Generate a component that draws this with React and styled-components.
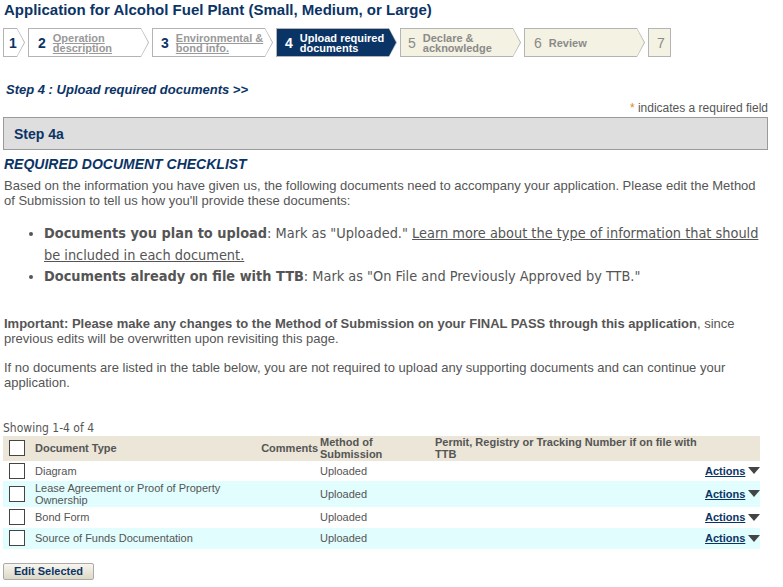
import React from 'react';
import styled, { createGlobalStyle } from 'styled-components';

const NAVY = '#0b3466';
const GREY = '#555';
const NARROW = '"Liberation Sans", Arial, sans-serif';

const GlobalStyle = createGlobalStyle`
  body {
    margin: 0;
    background: #fff;
    font-family: "Liberation Sans", Arial, sans-serif;
  }
`;

// レイアウト
const Page = styled.div`
  padding: 0 15px 0 3px;
  width: 765px;
`;
const Title = styled.h1`
  margin: 1px 0 0 1px;
  font-size: 15px;
  line-height: 18px;
  font-weight: bold;
  color: ${NAVY};
`;
const Steps = styled.div`
  display: flex;
  gap: 3px;
  margin-top: 9px;
  height: 29px;
`;
const StepOuter = styled.div`
  box-sizing: border-box;
  width: ${(p) => p.$w}px;
  padding: 1px;
  background: #b4b4b4;
  clip-path: ${(p) => (p.$tip
    ? 'polygon(0 0, calc(100% - 8px) 0, 100% 50%, calc(100% - 8px) 100%, 0 100%)'
    : 'none')};
`;
const StepInner = styled.div`
  height: 100%;
  display: flex;
  align-items: center;
  gap: 7px;
  padding-left: ${(p) => p.$pl}px;
  box-sizing: border-box;
  background: ${(p) => p.$bg};
  clip-path: ${(p) => (p.$tip
    ? 'polygon(0 0, calc(100% - 7px) 0, 100% 50%, calc(100% - 7px) 100%, 0 100%)'
    : 'none')};
`;
const StepNum = styled.span`
  font-size: 14px;
  font-weight: ${(p) => (p.$muted ? 'normal' : 'bold')};
  color: ${(p) => p.$color};
`;
const StepLabel = styled.span`
  font-size: 11px;
  line-height: 10px;
  font-weight: bold;
  color: ${(p) => p.$color};
  text-decoration: ${(p) => (p.$link ? 'underline' : 'none')};
`;
const StepHeading = styled.div`
  margin: 24px 0 0 3px;
  font-family: ${NARROW};
  font-size: 13px;
  line-height: 18px;
  font-style: italic;
  font-weight: bold;
  color: ${NAVY};
`;
const RequiredNote = styled.div`
  margin-top: 2px;
  text-align: right;
  font-family: ${NARROW};
  font-size: 12px;
  line-height: 14px;
  color: ${GREY};
  & b { color: #e0872a; font-weight: normal; }
`;
const SectionBox = styled.div`
  margin-top: 2px;
  height: 31px;
  display: flex;
  align-items: center;
  padding-left: 10px;
  background: #dedede;
  border: 1px solid #9a9a9a;
  font-family: ${NARROW};
  font-size: 14px;
  font-weight: bold;
  color: ${NAVY};
`;
const ChecklistTitle = styled.div`
  margin: 6px 0 0 1px;
  font-family: ${NARROW};
  font-size: 14px;
  line-height: 16px;
  font-style: italic;
  font-weight: bold;
  color: ${NAVY};
`;
const Para = styled.p`
  margin: ${(p) => p.$mt}px 0 0 1px;
  font-family: ${NARROW};
  font-size: 13px;
  line-height: 15px;
  color: ${GREY};
  & b { font-weight: bold; }
`;
const Bullets = styled.ul`
  margin: 15px 0 0;
  padding-left: 41px;
  font-family: "DejaVu Sans Condensed", "DejaVu Sans", sans-serif;
  font-stretch: condensed;
  font-size: 14.4px;
  line-height: 21.5px;
  color: ${GREY};
  & b { font-weight: bold; }
  & a { color: ${GREY}; text-decoration: underline; }
`;
const Showing = styled.div`
  margin: 30px 0 0;
  font-family: "DejaVu Sans Condensed", "DejaVu Sans", sans-serif;
  font-size: 12px;
  line-height: 16px;
  color: ${GREY};
`;
const Table = styled.table`
  width: 757px;
  table-layout: fixed;
  border-collapse: collapse;
  font-size: 11px;
  color: ${GREY};
  & th {
    background: #ebe6d7;
    font-weight: bold;
    text-align: left;
    vertical-align: middle;
    line-height: 12px;
    height: 25px;
    padding: 0;
  }
  & td {
    padding: 0;
    vertical-align: middle;
    line-height: 12px;
  }
`;
const Row = styled.tr`
  height: ${(p) => p.$h}px;
  background: ${(p) => (p.$alt ? '#e1fdfd' : '#fff')};
`;
const Check = styled.span`
  display: block;
  width: 14px;
  height: 14px;
  margin-left: 6px;
  border: 1px solid #444;
  background: #fff;
`;
const TypeCell = styled.td`
  padding-left: 5px !important;
`;
const HeadRight = styled.th`
  text-align: right !important;
  padding-right: 2px !important;
`;
const ActionsCell = styled.td`
  text-align: right;
  white-space: nowrap;
`;
const ActionsLink = styled.a`
  color: ${NAVY};
  font-weight: bold;
  font-size: 11px;
  text-decoration: underline;
  display: inline-flex;
  align-items: center;
  gap: 2px;
  & svg { margin-left: 1px; }
`;
const EditButton = styled.button`
  margin-top: 14px;
  width: 91px;
  height: 17px;
  padding: 0;
  border: 1px solid #aaa;
  border-radius: 2px;
  background: linear-gradient(#f8f6ee, #ddd8c6);
  font-family: "Liberation Sans", Arial, sans-serif;
  font-size: 11px;
  font-weight: bold;
  color: ${NAVY};
`;

const steps = [
  { n: '1', w: 22, tip: true, pl: 5 },
  { n: '2', label: ['Operation', 'description'], w: 121, tip: true, pl: 9, done: true },
  { n: '3', label: ['Environmental &', 'bond info.'], w: 121, tip: true, pl: 8, done: true },
  { n: '4', label: ['Upload required', 'documents'], w: 121, tip: true, pl: 8, active: true },
  { n: '5', label: ['Declare &', 'acknowledge'], w: 121, tip: true, pl: 7 },
  { n: '6', label: ['Review'], w: 121, tip: true, pl: 9 },
  { n: '7', w: 23, tip: false, pl: 8 },
];

const docs = [
  { name: 'Diagram', h: 20 },
  { name: 'Lease Agreement or Proof of Property Ownership', h: 26 },
  { name: 'Bond Form', h: 21 },
  { name: 'Source of Funds Documentation', h: 21 },
];

const Caret = () => (
  <svg width="12" height="7" viewBox="0 0 12 7">
    <path d="M0 0 H12 L6 7 Z" fill="#444" />
  </svg>
);

const StepItem = ({ s }) => {
  const future = !s.done && !s.active && s.n !== '1';
  const bg = s.active ? NAVY : future ? '#f4f2e2' : '#fff';
  const numColor = s.active ? '#fff' : future ? '#8a8a8a' : NAVY;
  const labelColor = s.active ? '#fff' : s.done ? '#999' : '#8a8a8a';
  return (
    <StepOuter $w={s.w} $tip={s.tip}>
      <StepInner $bg={bg} $tip={s.tip} $pl={s.pl}>
        <StepNum $color={numColor} $muted={future}>{s.n}</StepNum>
        {s.label && (
          <StepLabel $color={labelColor} $link={s.done}>
            {s.label.map((l) => <div key={l}>{l}</div>)}
          </StepLabel>
        )}
      </StepInner>
    </StepOuter>
  );
};

const App = () => (
  <Page>
    <GlobalStyle />
    <Title>Application for Alcohol Fuel Plant (Small, Medium, or Large)</Title>
    <Steps>
      {steps.map((s) => <StepItem key={s.n} s={s} />)}
    </Steps>
    <StepHeading>Step 4 : Upload required documents &gt;&gt;</StepHeading>
    <RequiredNote><b>*</b> indicates a required field</RequiredNote>
    <SectionBox>Step 4a</SectionBox>
    <ChecklistTitle>REQUIRED DOCUMENT CHECKLIST</ChecklistTitle>
    <Para $mt={6}>
      Based on the information you have given us, the following documents need to accompany your application. Please edit the Method of Submission to tell us how you'll provide these documents:
    </Para>
    <Bullets>
      <li>
        <b>Documents you plan to upload</b>: Mark as "Uploaded." <a href="#">Learn more about the type of information that should be included in each document.</a>
      </li>
      <li>
        <b>Documents already on file with TTB</b>: Mark as "On File and Previously Approved by TTB."
      </li>
    </Bullets>
    <Para $mt={28}>
      <b>Important: Please make any changes to the Method of Submission on your FINAL PASS through this application</b>, since previous edits will be overwritten upon revisiting this page.
    </Para>
    <Para $mt={14}>
      If no documents are listed in the table below, you are not required to upload any supporting documents and can continue your application.
    </Para>
    <Showing>Showing 1-4 of 4</Showing>
    <Table>
      <colgroup>
        <col style={{ width: 27 }} />
        <col style={{ width: 222 }} />
        <col style={{ width: 68 }} />
        <col style={{ width: 115 }} />
        <col style={{ width: 270 }} />
        <col style={{ width: 55 }} />
      </colgroup>
      <thead>
        <tr>
          <th><Check /></th>
          <th style={{ paddingLeft: 5 }}>Document Type</th>
          <HeadRight>Comments</HeadRight>
          <th>Method of<br />Submission</th>
          <th>Permit, Registry or Tracking Number if on file with TTB</th>
          <th />
        </tr>
      </thead>
      <tbody>
        {docs.map((d, i) => (
          <Row key={d.name} $h={d.h} $alt={i % 2 === 1}>
            <td><Check /></td>
            <TypeCell>{d.name}</TypeCell>
            <td />
            <td>Uploaded</td>
            <td />
            <ActionsCell>
              <ActionsLink href="#">Actions <Caret /></ActionsLink>
            </ActionsCell>
          </Row>
        ))}
      </tbody>
    </Table>
    <EditButton type="button">Edit Selected</EditButton>
  </Page>
);

export default App;
